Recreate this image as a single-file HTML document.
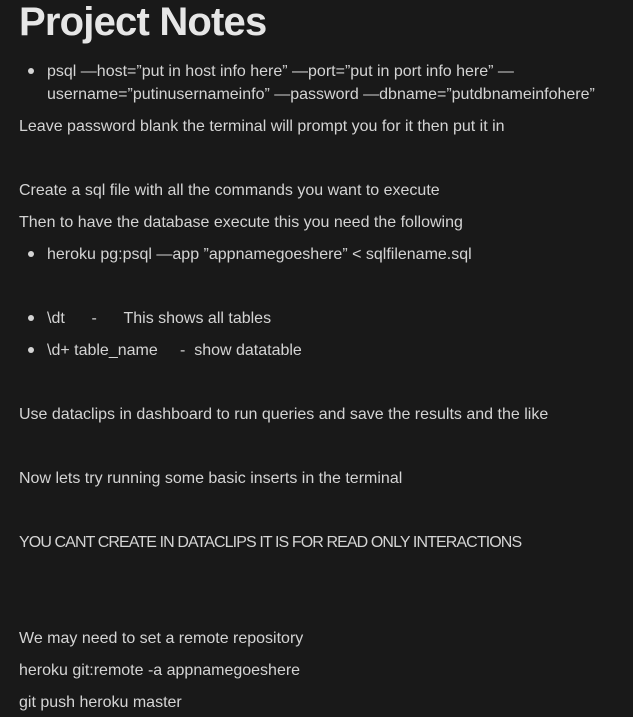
<!DOCTYPE html>
<html><head><meta charset="utf-8"><style>
html,body{margin:0;padding:0;background:#191919;width:633px;height:717px;overflow:hidden}
body{font-family:"Liberation Sans",sans-serif;color:#d4d4d4;font-size:16px;position:relative}
.l{position:absolute;left:19px;height:32px;line-height:32px;white-space:nowrap}
.b{left:47px}
.b::before{content:"";position:absolute;left:-19px;top:12px;width:6px;height:6px;border-radius:50%;background:#d4d4d4}
h1{position:absolute;left:19px;top:2px;margin:0;font-size:40px;line-height:40px;font-weight:bold;color:#e6e6e6;letter-spacing:-0.8px}
.n::before{display:none}
</style></head><body>
<h1>Project Notes</h1>
<div class="l b" style="top:56px">psql —host=”put in host info here” —port=”put in port info here” —</div>
<div class="l b n" style="top:79px">username=”putinusernameinfo” —password —dbname=”putdbnameinfohere”</div>
<div class="l" style="top:111px">Leave password blank the terminal will prompt you for it then put it in</div>
<div class="l" style="top:175px">Create a sql file with all the commands you want to execute</div>
<div class="l" style="top:207px">Then to have the database execute this you need the following</div>
<div class="l b" style="top:239px">heroku pg:psql —app ”appnamegoeshere” &lt; sqlfilename.sql</div>
<div class="l b" style="top:303px">\dt&nbsp;&nbsp;&nbsp;&nbsp;&nbsp;&nbsp;-&nbsp;&nbsp;&nbsp;&nbsp;&nbsp;&nbsp;This shows all tables</div>
<div class="l b" style="top:335px">\d+ table_name&nbsp;&nbsp;&nbsp;&nbsp;&nbsp;-&nbsp;&nbsp;show datatable</div>
<div class="l" style="top:399px">Use dataclips in dashboard to run queries and save the results and the like</div>
<div class="l" style="top:463px">Now lets try running some basic inserts in the terminal</div>
<div class="l" style="top:527px;letter-spacing:-0.9px">YOU CANT CREATE IN DATACLIPS IT IS FOR READ ONLY INTERACTIONS</div>
<div class="l" style="top:623px">We may need to set a remote repository</div>
<div class="l" style="top:655px">heroku git:remote -a appnamegoeshere</div>
<div class="l" style="top:687px">git push heroku master</div>
</body></html>
